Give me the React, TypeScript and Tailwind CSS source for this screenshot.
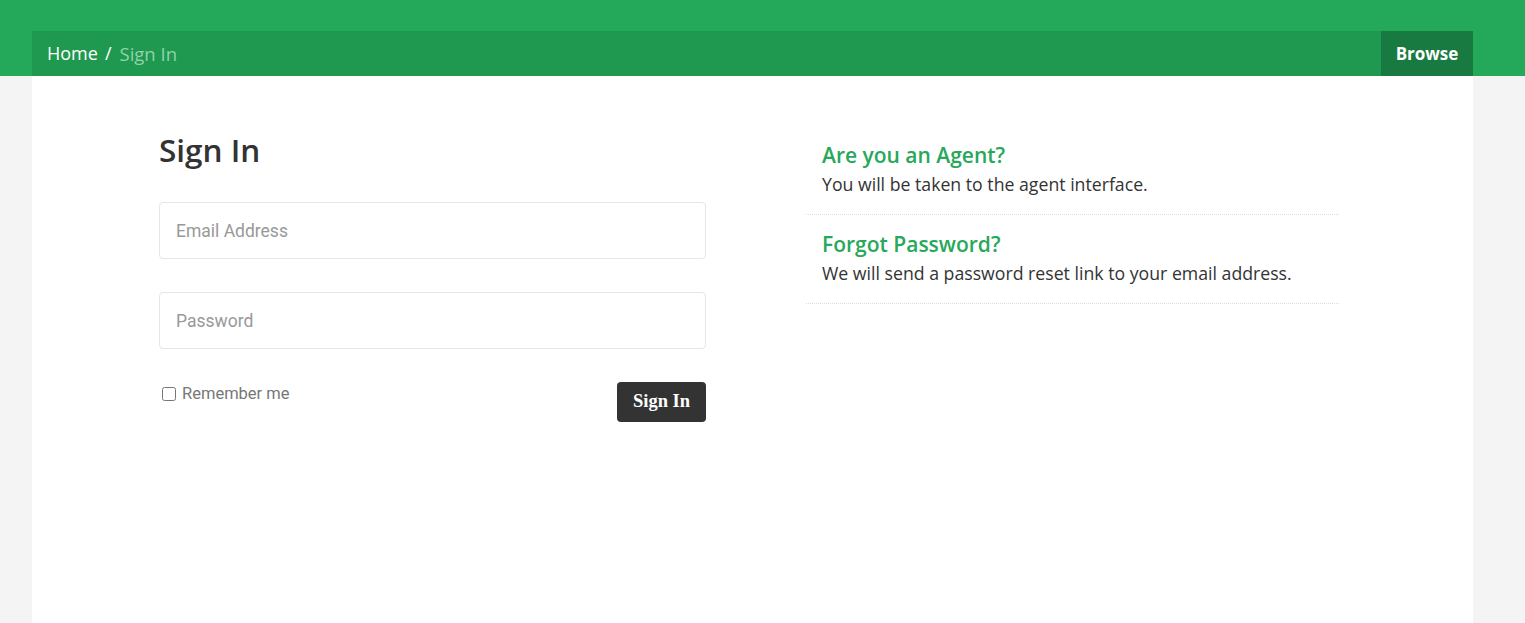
import { useState } from 'react';

const sans = "font-['Open_Sans',sans-serif]";

function Breadcrumb() {
  return (
    <div className="bg-[#24a85a] pt-[31px]">
      <div className="ml-8 flex h-[45px] w-[1441px] items-stretch justify-between bg-[#1f9850]">
        <div className={`flex items-center pl-[15px] text-[18px] ${sans}`}>
          <a href="#" className="text-white">Home</a>
          <span className="pl-[7px] pr-[8px] text-white">/</span>
          <span className="text-[18.5px] text-[#8fd3a9]">Sign In</span>
        </div>
        <a
          href="#"
          className={`flex w-[92px] items-center justify-center bg-[#187a40] text-[17px] font-bold text-white ${sans}`}
        >
          Browse
        </a>
      </div>
    </div>
  );
}

function SignInForm() {
  const [remember, setRemember] = useState(false);

  return (
    <div className="w-[547px]">
      <h1 className={`text-[31.5px] font-semibold leading-[48px] text-[#333] ${sans}`}>Sign In</h1>
      <form className="mt-[28px] flex flex-col" onSubmit={(e) => e.preventDefault()}>
        <input
          type="email"
          placeholder="Email Address"
          className="h-[57px] rounded-[4px] border border-[#e6e6e6] px-4 font-['Roboto',sans-serif] text-[17.5px] text-[#333] outline-none placeholder:text-[#999]"
        />
        <input
          type="password"
          placeholder="Password"
          className="mt-[33px] h-[57px] rounded-[4px] border border-[#e6e6e6] px-4 font-['Roboto',sans-serif] text-[17.5px] text-[#333] outline-none placeholder:text-[#999]"
        />
        <div className="mt-[33px] flex items-start justify-between">
          <label className="flex items-center gap-[6px] pl-[3px] font-['Roboto',sans-serif] text-[16.5px] text-[#777]">
            <input
              type="checkbox"
              checked={remember}
              onChange={(e) => setRemember(e.target.checked)}
              className="h-[14px] w-[14px]"
            />
            Remember me
          </label>
          <button
            type="submit"
            className="h-[40px] w-[89px] rounded-[4px] bg-[#333] font-['Liberation_Serif',serif] text-[18.5px] font-bold text-white"
          >
            Sign In
          </button>
        </div>
      </form>
    </div>
  );
}

const links = [
  { title: 'Are you an Agent?', text: 'You will be taken to the agent interface.' },
  { title: 'Forgot Password?', text: 'We will send a password reset link to your email address.' },
];

function SideLinks() {
  return (
    <ul className="w-[533px]">
      {links.map((link) => (
        <li key={link.title} className="border-b border-dotted border-[#dcdcdc] px-4 pb-4 pt-[14px]">
          <a href="#" className={`block text-[21px] font-semibold leading-[30px] text-[#27a85a] ${sans}`}>
            {link.title}
          </a>
          <p className={`text-[17.7px] leading-[28px] text-[#333] ${sans}`}>{link.text}</p>
        </li>
      ))}
    </ul>
  );
}

export default function App() {
  return (
    <div className="min-h-[623px] bg-[#f4f4f4]">
      <Breadcrumb />
      <main className="ml-8 flex min-h-[547px] w-[1441px] gap-[100px] bg-white pl-[127px] pt-[50px]">
        <SignInForm />
        <SideLinks />
      </main>
    </div>
  );
}
